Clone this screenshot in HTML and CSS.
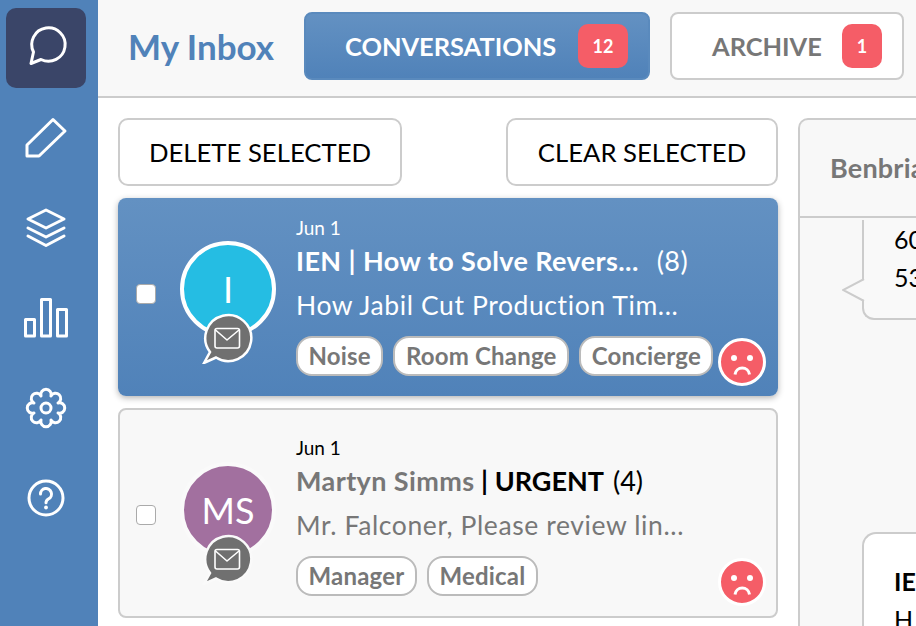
FILE: index.html
```html
<!DOCTYPE html>
<html lang="en">
<head>
<meta charset="utf-8">
<title>My Inbox</title>
<link rel="stylesheet" href="styles.css">
</head>
<body>
<div class="app">
  <nav class="sidebar">
    <a class="nav-item active"><svg class="nav-icon" viewBox="0 0 48 48"><path d="M9 39.5L11.5 28A16.7 16.7 0 1 1 19 35.5Z"/></svg></a>
    <a class="nav-item"><svg class="nav-icon" viewBox="0 0 48 48"><path d="M5 42V31L31 5.5L43 17L17 42Z"/></svg></a>
    <a class="nav-item"><svg class="nav-icon" viewBox="0 0 48 48"><path d="M24 6L42 15L24 24L6 15Z"/><path d="M6 24L24 33L42 24"/><path d="M6 32L24 41.5L42 32"/></svg></a>
    <a class="nav-item"><svg class="nav-icon" viewBox="0 0 48 48"><rect x="3.5" y="25.5" width="9" height="16.5"/><rect x="19.5" y="5.5" width="9" height="36.5"/><rect x="35.5" y="15.5" width="9" height="26.5"/></svg></a>
    <a class="nav-item"><svg class="nav-icon" viewBox="0 0 48 48"><path d="M28.97 11.99A5.2 5.2 0 1 1 36.01 19.03A5.2 5.2 0 1 1 36.01 28.97A5.2 5.2 0 1 1 28.97 36.01A5.2 5.2 0 1 1 19.03 36.01A5.2 5.2 0 1 1 11.99 28.97A5.2 5.2 0 1 1 11.99 19.03A5.2 5.2 0 1 1 19.03 11.99A5.2 5.2 0 1 1 28.97 11.99Z"/><circle cx="24" cy="24" r="5"/></svg></a>
    <a class="nav-item"><svg class="nav-icon" viewBox="0 0 48 48"><circle cx="24" cy="24" r="17"/><path d="M18.5 20a5.5 5.5 0 1 1 8.2 4.8c-2 1.1-2.7 2-2.7 4"/><circle class="dot" cx="24" cy="33.5" r="1.9"/></svg></a>
  </nav>
  <div class="main">
    <header class="topbar">
      <h1 class="title">My Inbox</h1>
      <a class="tab tab-active"><span>CONVERSATIONS</span><span class="count count-wide">12</span></a>
      <a class="tab tab-archive"><span>ARCHIVE</span><span class="count">1</span></a>
    </header>
    <div class="content">
      <section class="list">
        <div class="actions">
          <button class="action action-delete">DELETE SELECTED</button>
          <button class="action action-clear">CLEAR SELECTED</button>
        </div>
        <article class="card card-selected">
          <span class="check"></span>
          <div class="avatar-wrap">
            <div class="avatar avatar-blue">I</div>
            <svg class="mail" viewBox="0 0 52 52"><path class="mail-bg" d="M3 51L9 40A23 23 0 1 1 15 45.5Z"/><g class="mail-env"><rect x="14" y="16.5" width="24.5" height="19.5" rx="2"/><path d="M14.5 18L26 28L38 18"/></g></svg>
          </div>
          <div class="body">
            <div class="date">Jun 1</div>
            <div class="subject"><span class="subject-text">IEN | How to Solve Revers...</span><span class="num">(8)</span></div>
            <div class="preview">How Jabil Cut Production Tim...</div>
            <div class="tags"><span class="tag">Noise</span><span class="tag">Room Change</span><span class="tag">Concierge</span></div>
          </div>
          <svg class="face" viewBox="0 0 48 48"><circle class="face-bg" cx="24" cy="24" r="22.5"/><circle class="eye" cx="16" cy="20" r="3"/><circle class="eye" cx="32" cy="20" r="3"/><path class="mouth" d="M17 36.5a7.3 7.3 0 0 1 14.5 0"/></svg>
        </article>
        <article class="card card-plain">
          <span class="check"></span>
          <div class="avatar-wrap">
            <div class="avatar avatar-purple">MS</div>
            <svg class="mail" viewBox="0 0 52 52"><path class="mail-bg" d="M3 51L9 40A23 23 0 1 1 15 45.5Z"/><g class="mail-env"><rect x="14" y="16.5" width="24.5" height="19.5" rx="2"/><path d="M14.5 18L26 28L38 18"/></g></svg>
          </div>
          <div class="body">
            <div class="date">Jun 1</div>
            <div class="subject"><span class="subject-text">Martyn Simms</span><span class="sep"> | URGENT</span><span class="num">(4)</span></div>
            <div class="preview">Mr. Falconer, Please review lin...</div>
            <div class="tags"><span class="tag">Manager</span><span class="tag">Medical</span></div>
          </div>
          <svg class="face" viewBox="0 0 48 48"><circle class="face-bg" cx="24" cy="24" r="22.5"/><circle class="eye" cx="16" cy="20" r="3"/><circle class="eye" cx="32" cy="20" r="3"/><path class="mouth" d="M17 36.5a7.3 7.3 0 0 1 14.5 0"/></svg>
        </article>
      </section>
      <section class="panel">
        <div class="panel-head">Benbria</div>
        <div class="panel-body">
          <div class="bubble bubble-top"><div>60</div><div>53</div><svg class="tail" viewBox="0 0 24 24"><path class="tail-fill" d="M24 0L1 11L24 22Z"/><path class="tail-line" d="M22 0L1 11L22 22"/></svg></div>
          <div class="bubble bubble-next"><div class="bubble-title">IE</div><div>H</div></div>
        </div>
      </section>
    </div>
  </div>
</div>
</body>
</html>
```

FILE: styles.css
```css
* { box-sizing: border-box; }
html, body { margin: 0; height: 100%; overflow: hidden; }
body { font-family: "Lato", "Liberation Sans", sans-serif; background: #fff; color: #000; }
.app { display: flex; height: 626px; width: 916px; overflow: hidden; }

.sidebar { flex: 0 0 98px; background: #5082b9; padding: 8px 12px 0 6px; display: flex; flex-direction: column; gap: 10px; }
.nav-item { width: 80px; height: 80px; border-radius: 10px; display: flex; align-items: center; justify-content: center; flex: none; }
.nav-item.active { background: #3a4568; }
.nav-icon { width: 48px; height: 48px; fill: none; stroke: #fff; stroke-width: 3; stroke-linejoin: round; stroke-linecap: round; }
.nav-icon .dot { fill: #fff; stroke: none; }

.main { flex: 1; min-width: 0; display: flex; flex-direction: column; }
.topbar { height: 98px; flex: none; background: #f8f8f8; border-bottom: 2px solid #ccc; display: flex; align-items: flex-start; padding: 12px 0 0 30px; white-space: nowrap; }
.title { margin: 0 30px 0 0; width: 146px; font-size: 35px; font-weight: 700; color: #5082b9; line-height: 68px; }
.tab { height: 68px; display: flex; align-items: center; justify-content: space-between; padding: 0 20px 0 39px; margin-right: 20px; border: 2px solid #ccc; border-radius: 8px; background: #fff; color: #777; font-size: 25.4px; font-weight: 700; flex: none; width: 346px; }
.tab-archive { width: 234px; padding-left: 40px; }
.tab-active { background: linear-gradient(#6391c2, #5082b9); border-color: #5a8abd; color: #fff; }
.count { width: 40px; height: 44px; border-radius: 10px; background: #f55d67; color: #fff; font-size: 18px; font-weight: 700; display: flex; align-items: center; justify-content: center; }
.count-wide { width: 50px; }

.content { flex: 1; min-height: 0; display: flex; padding: 20px 0 0 20px; gap: 20px; }
.list { flex: 0 0 660px; display: flex; flex-direction: column; gap: 12px; }
.actions { display: flex; justify-content: space-between; margin-bottom: 0; }
.action { height: 68px; border: 2px solid #ccc; border-radius: 10px; background: #fff; font: 400 25.7px "Lato", "Liberation Sans", sans-serif; color: #000; padding: 0; }
.action-delete { width: 284px; }
.action-clear { width: 272px; }

.card { position: relative; display: flex; align-items: center; border-radius: 8px; padding: 20px 0 20px 18px; flex: none; }
.card-selected { height: 198px; background: linear-gradient(#6391c2, #5082b9); box-shadow: 0 2px 6px rgba(0,0,0,.3); color: #fff; }
.card-plain { height: 210px; background: #f8f8f8; border: 2px solid #ccc; padding: 28px 0 20px 16px; }
.check { flex: none; width: 20px; height: 20px; border: 1px solid #aaa; border-radius: 4px; background: #fff; margin: 0 24px 6px 0; }
.card-plain .check { margin-bottom: 4px; }
.avatar-wrap { position: relative; flex: none; width: 96px; height: 121px; margin: 9px 20px 0 0; }
.card-plain .avatar-wrap { margin-top: 11px; }
.avatar { width: 96px; height: 96px; border-radius: 50%; display: flex; align-items: center; justify-content: center; border: 4px solid #fff; color: #fff; font-size: 36px; }
.card-plain .avatar { border-color: #fafafa; }
.avatar-blue { background: #25bde3; }
.avatar-purple { background: #a2709f; }
.mail { position: absolute; left: 21px; top: 71px; width: 52px; height: 52px; }
.mail-bg { fill: #707070; stroke: #fff; stroke-width: 2.5; }
.card-plain .mail-bg { stroke: #fafafa; }
.mail-env { fill: none; stroke: #fff; stroke-width: 1.6; stroke-linejoin: round; }

.body { flex: 1; min-width: 0; white-space: nowrap; }
.date { font-size: 19px; line-height: 20px; margin-top: -1px; }
.subject { font-size: 27px; letter-spacing: .4px; font-weight: 700; line-height: 32px; margin-top: 7px; display: flex; }
.card-plain .subject-text { color: #777; }
.sep { white-space: pre; color: #000; letter-spacing: 0; }
.num { font-weight: 400; margin-left: 18px; }
.card-plain .num { margin-left: 9px; letter-spacing: 0; }
.preview { font-size: 26.5px; letter-spacing: .6px; line-height: 32px; margin-top: 12px; }
.card-plain .preview { color: #777; }
.tags { display: flex; gap: 10px; margin-top: 15px; }
.tag { height: 40px; border: 2px solid #bbb; border-radius: 16px; background: #fff; color: #777; font-size: 24px; font-weight: 700; letter-spacing: .2px; padding: 0 10.5px; display: flex; align-items: center; }

.face { position: absolute; bottom: 10px; width: 48px; height: 48px; }
.card-selected .face { right: 12px; }
.card-plain .face { right: 10px; bottom: 10px; }
.face-bg { fill: #f55d67; stroke: #fff; stroke-width: 3; }
.eye { fill: #fff; }
.mouth { fill: none; stroke: #fff; stroke-width: 3; }

.panel { flex: 0 0 auto; width: 300px; border: 2px solid #ccc; border-bottom: 0; border-right: 0; border-radius: 10px 0 0 0; background: #f8f8f8; display: flex; flex-direction: column; overflow: hidden; }
.panel-head { height: 98px; flex: none; border-bottom: 2px solid #ccc; font-size: 27px; font-weight: 700; letter-spacing: .2px; color: #777; padding-left: 30px; line-height: 96px; }
.panel-body { flex: 1; min-height: 0; padding: 2px 0 0 62px; overflow: hidden; position: relative; font-size: 25px; }
.bubble { width: 400px; border: 2px solid #ccc; padding-left: 30px; position: relative; }
.bubble-top { height: 100px; border-top: 0; border-right: 0; border-radius: 0 0 0 12px; background: #f9f9f9; line-height: 38px; }
.bubble-next { margin-top: 212px; height: 200px; border-right: 0; border-bottom: 0; border-radius: 14px 0 0 0; background: #fff; padding-top: 28px; line-height: 38px; }
.bubble-title { font-weight: 700; }
.tail { position: absolute; left: -22px; top: 59px; width: 24px; height: 24px; }
.tail-fill { fill: #f9f9f9; }
.tail-line { fill: none; stroke: #ccc; stroke-width: 2; }
```
